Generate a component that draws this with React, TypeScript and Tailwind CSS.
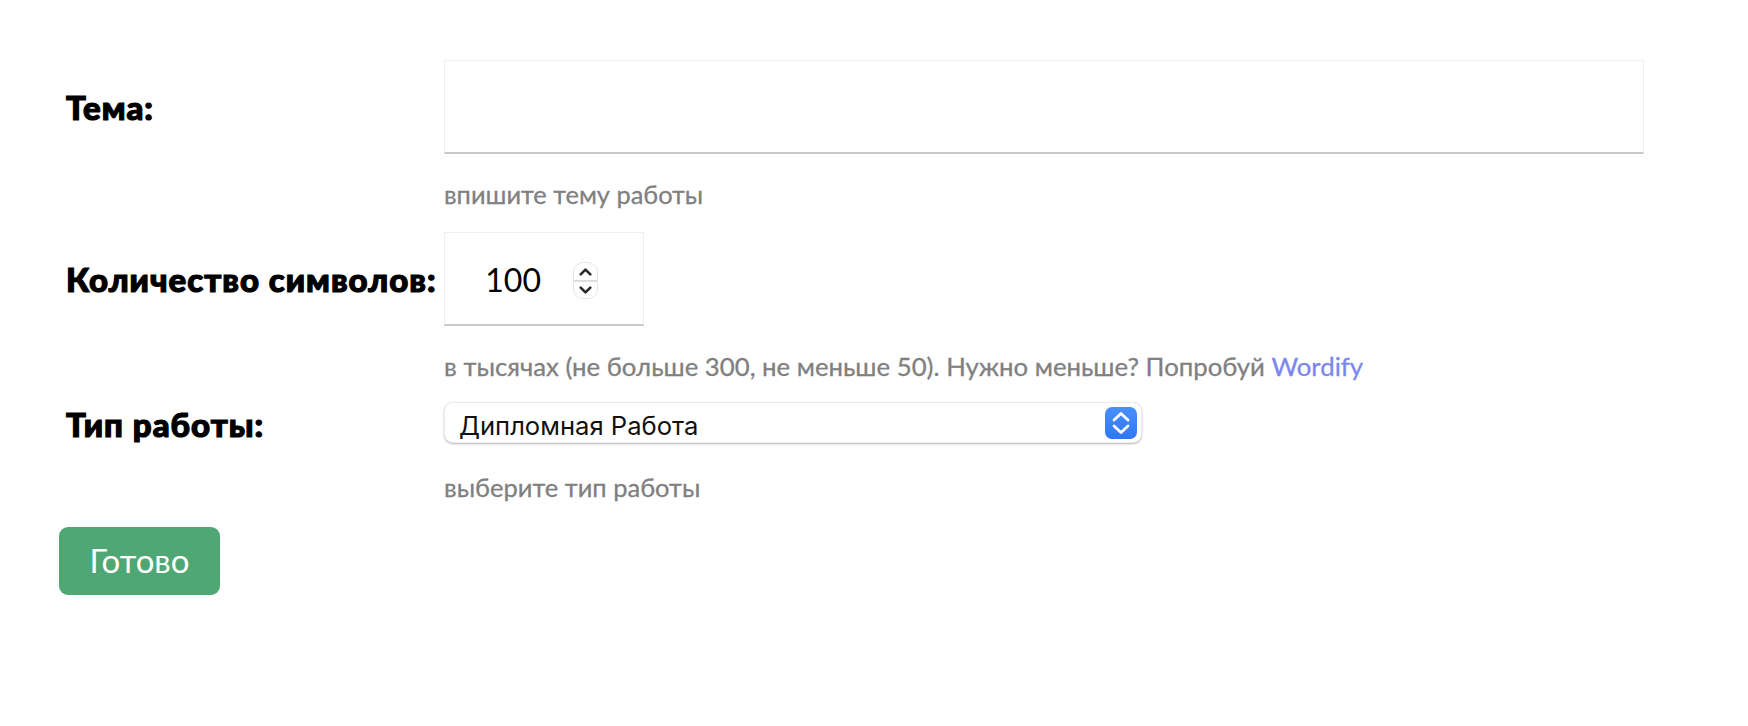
const labelClass = "w-[385px] shrink-0 pl-[7px] text-[33px] font-black tracking-[1px] text-black whitespace-nowrap [-webkit-text-stroke:1.2px_black] font-['Lato','Noto_Sans',sans-serif]";
const hintClass = "ml-[385px] leading-[30px] text-[#808080] [-webkit-text-stroke:0.3px_#808080] font-['Lato','Noto_Sans',sans-serif]";

export default function App() {
  return (
    <div className="min-h-[726px] bg-white pt-[60px] pl-[59px]">
      <form className="flex flex-col items-start">
        <div className="flex items-center">
          <label className={`${labelClass} leading-[40px]`}>Тема:</label>
          <input
            type="text"
            className="h-[94px] w-[1200px] border border-[#eeeeee] border-b-2 border-b-[#c8c8c8] bg-white outline-none"
          />
        </div>
        <p className={`${hintClass} mt-[25px] text-[25.4px]`}>впишите тему работы</p>
        <div className="mt-[23px] flex items-center">
          <label className={`${labelClass} leading-[40px]`}>Количество символов:</label>
          <div className="relative h-[94px] w-[200px] border border-[#eeeeee] border-b-2 border-b-[#c8c8c8] bg-white">
            <input
              type="text"
              readOnly
              value="100"
              className="h-full w-[96px] bg-transparent pt-[1px] text-right text-[32px] text-black outline-none font-['Lato',sans-serif]"
            />
            <div className="absolute left-[128px] top-[29px] flex h-[37px] w-[25px] flex-col rounded-[10px] border border-[#e6e6e6] bg-white">
              <svg viewBox="0 0 24 17" className="h-[17px] w-full" fill="none" stroke="#2b2b2b" strokeWidth="2.8" strokeLinecap="round" strokeLinejoin="round">
                <path d="M7 11.5 L12 6.5 L17 11.5" />
              </svg>
              <div className="h-[2px] bg-[#dddddd]" />
              <svg viewBox="0 0 24 16" className="h-[16px] w-full" fill="none" stroke="#2b2b2b" strokeWidth="2.8" strokeLinecap="round" strokeLinejoin="round">
                <path d="M7 5.5 L12 10.5 L17 5.5" />
              </svg>
            </div>
          </div>
        </div>
        <p className={`${hintClass} mt-[25px] text-[25.75px]`}>
          в тысячах (не больше 300, не меньше 50). Нужно меньше? Попробуй{" "}
          <a href="#" className="text-[#7b86ee] [-webkit-text-stroke:0.3px_#7b86ee]">Wordify</a>
        </p>
        <div className="mt-[21px] flex items-center">
          <label className={`${labelClass} pt-[4px] leading-[37px]`}>Тип работы:</label>
          <div className="relative h-[41px] w-[698px] rounded-[9px] border border-[#ececec] bg-white shadow-[0_1px_2px_rgba(0,0,0,0.3)]">
            <select className="h-full w-full appearance-none bg-transparent pl-[14px] pt-[4px] text-[25.6px] text-[#111111] outline-none font-['Inter',sans-serif]">
              <option>Дипломная Работа</option>
            </select>
            <div className="pointer-events-none absolute right-[4px] top-[4px] flex h-[32px] w-[32px] items-center justify-center rounded-[7px] bg-gradient-to-b from-[#4a90fb] to-[#2f76f6]">
              <svg viewBox="0 0 32 32" className="h-[32px] w-[32px]" fill="none" stroke="white" strokeWidth="2.8" strokeLinecap="round" strokeLinejoin="round">
                <path d="M9 13 L16 6.5 L23 13" />
                <path d="M9 19 L16 25.5 L23 19" />
              </svg>
            </div>
          </div>
        </div>
        <p className={`${hintClass} mt-[29px] text-[25.5px]`}>выберите тип работы</p>
        <button
          type="button"
          className="mt-[25px] h-[68px] w-[161px] rounded-[9px] bg-[#4fa873] text-[33px] text-white font-['Lato',sans-serif]"
        >
          Готово
        </button>
      </form>
    </div>
  );
}
